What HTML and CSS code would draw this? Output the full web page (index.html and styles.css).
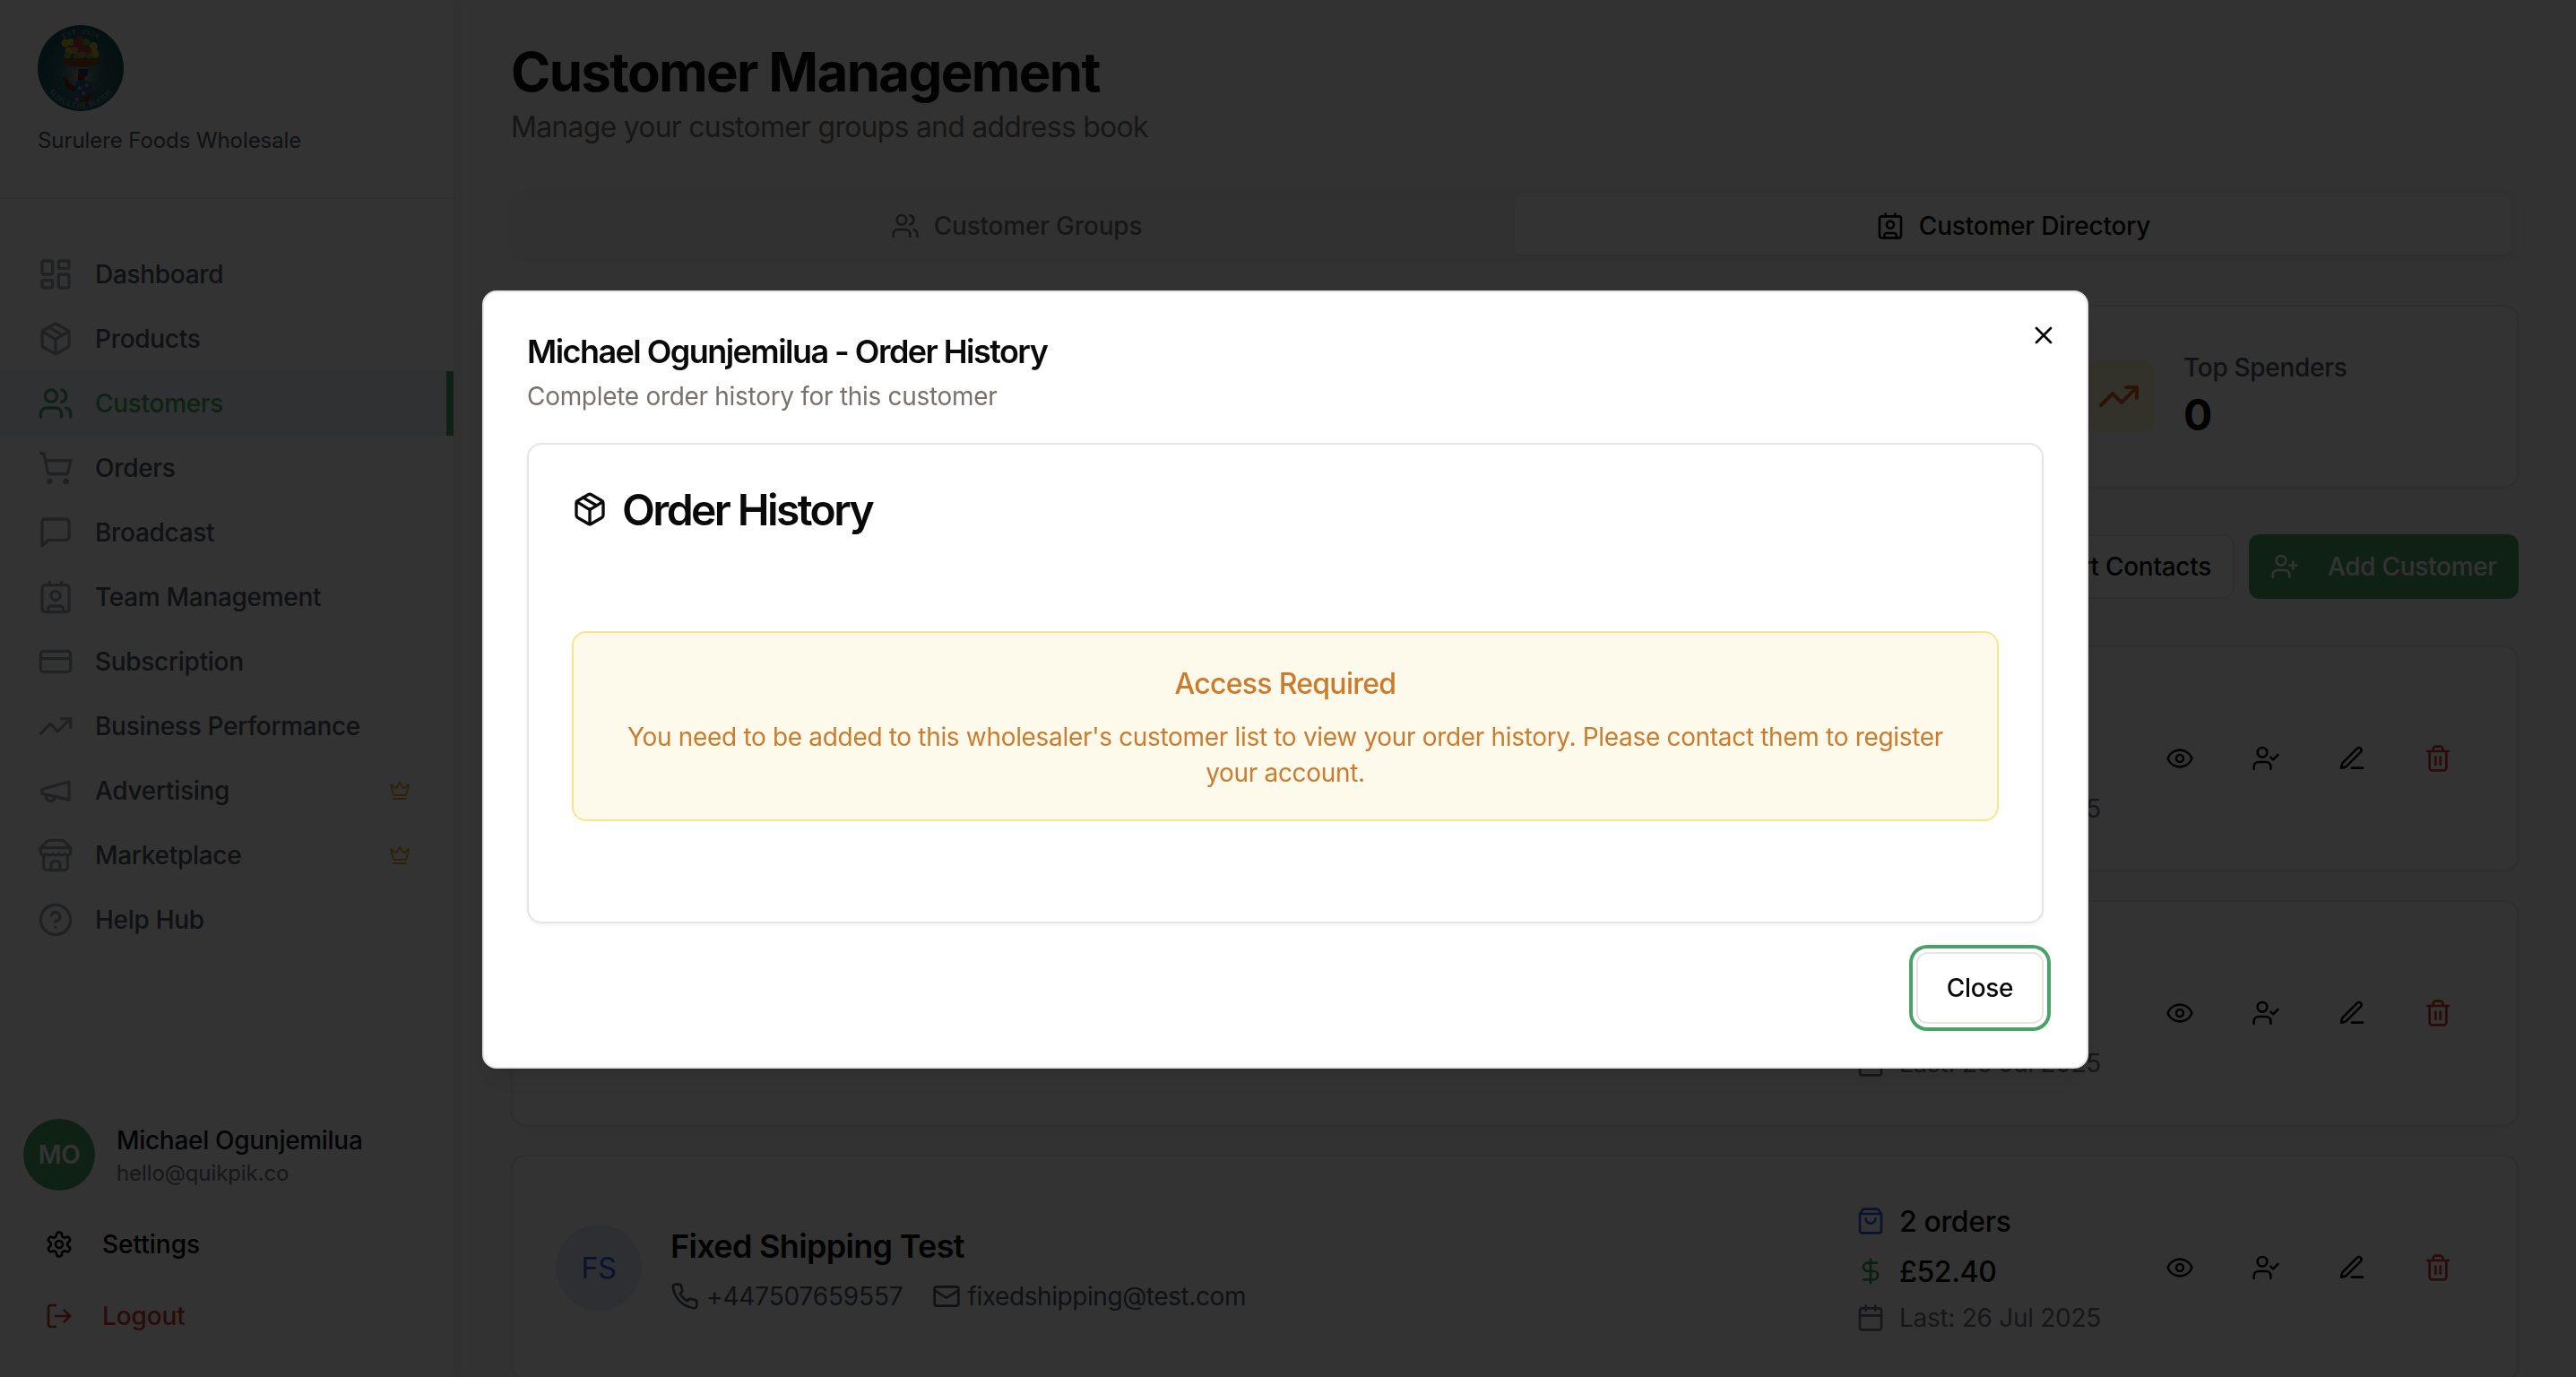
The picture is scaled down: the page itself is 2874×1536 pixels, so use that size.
FILE: index.html
```
<!DOCTYPE html>
<html lang="en">
<head>
<meta charset="utf-8">
<title>Customer Management</title>
<link rel="stylesheet" href="styles.css">
</head>
<body>
<svg class="sprite" aria-hidden="true">
  <symbol id="dashboard" viewBox="0 0 24 24"><rect width="7" height="9" x="3" y="3" rx="1"/><rect width="7" height="5" x="14" y="3" rx="1"/><rect width="7" height="9" x="14" y="12" rx="1"/><rect width="7" height="5" x="3" y="16" rx="1"/></symbol>
  <symbol id="package" viewBox="0 0 24 24"><path d="M11 21.73a2 2 0 0 0 2 0l7-4A2 2 0 0 0 21 16V8a2 2 0 0 0-1-1.73l-7-4a2 2 0 0 0-2 0l-7 4A2 2 0 0 0 3 8v8a2 2 0 0 0 1 1.73z"/><path d="M12 22V12"/><path d="m3.3 7 7.703 4.734a2 2 0 0 0 1.994 0L20.7 7"/><path d="m7.5 4.27 9 5.15"/></symbol>
  <symbol id="users" viewBox="0 0 24 24"><path d="M16 21v-2a4 4 0 0 0-4-4H6a4 4 0 0 0-4 4v2"/><circle cx="9" cy="7" r="4"/><path d="M22 21v-2a4 4 0 0 0-3-3.87"/><path d="M16 3.13a4 4 0 0 1 0 7.75"/></symbol>
  <symbol id="cart" viewBox="0 0 24 24"><circle cx="8" cy="21" r="1"/><circle cx="19" cy="21" r="1"/><path d="M2.05 2.05h2l2.66 12.42a2 2 0 0 0 2 1.58h9.78a2 2 0 0 0 1.95-1.57l1.65-7.43H5.12"/></symbol>
  <symbol id="message" viewBox="0 0 24 24"><path d="M21 15a2 2 0 0 1-2 2H7l-4 4V5a2 2 0 0 1 2-2h14a2 2 0 0 1 2 2z"/></symbol>
  <symbol id="contact" viewBox="0 0 24 24"><path d="M16 2v2"/><path d="M7 22v-2a2 2 0 0 1 2-2h6a2 2 0 0 1 2 2v2"/><path d="M8 2v2"/><circle cx="12" cy="11" r="3"/><rect x="3" y="4" width="18" height="18" rx="2"/></symbol>
  <symbol id="card" viewBox="0 0 24 24"><rect width="20" height="14" x="2" y="5" rx="2"/><path d="M2 10h20"/></symbol>
  <symbol id="trending" viewBox="0 0 24 24"><path d="M22 7l-8.5 8.5-5-5L2 17"/><path d="M16 7h6v6"/></symbol>
  <symbol id="megaphone" viewBox="0 0 24 24"><path d="m3 11 18-5v12L3 14v-3z"/><path d="M11.6 16.8a3 3 0 1 1-5.8-1.6"/></symbol>
  <symbol id="store" viewBox="0 0 24 24"><path d="m2 7 4.41-4.41A2 2 0 0 1 7.83 2h8.34a2 2 0 0 1 1.42.59L22 7"/><path d="M4 12v8a2 2 0 0 0 2 2h12a2 2 0 0 0 2-2v-8"/><path d="M15 22v-4a2 2 0 0 0-2-2h-2a2 2 0 0 0-2 2v4"/><path d="M2 7h20"/><path d="M22 7v3a2 2 0 0 1-2 2a2.7 2.7 0 0 1-1.59-.63.7.7 0 0 0-.82 0A2.7 2.7 0 0 1 16 12a2.7 2.7 0 0 1-1.59-.63.7.7 0 0 0-.82 0A2.7 2.7 0 0 1 12 12a2.7 2.7 0 0 1-1.59-.63.7.7 0 0 0-.82 0A2.7 2.7 0 0 1 8 12a2.7 2.7 0 0 1-1.59-.63.7.7 0 0 0-.82 0A2.7 2.7 0 0 1 4 12a2 2 0 0 1-2-2V7"/></symbol>
  <symbol id="help" viewBox="0 0 24 24"><circle cx="12" cy="12" r="10"/><path d="M9.09 9a3 3 0 0 1 5.83 1c0 2-3 3-3 3"/><path d="M12 17h.01"/></symbol>
  <symbol id="crown" viewBox="0 0 24 24"><path d="M11.562 3.266a.5.5 0 0 1 .876 0L15.39 8.87a1 1 0 0 0 1.516.294L21.183 5.5a.5.5 0 0 1 .798.519l-2.834 10.246a1 1 0 0 1-.956.734H5.81a1 1 0 0 1-.957-.734L2.02 6.02a.5.5 0 0 1 .798-.519l4.276 3.664a1 1 0 0 0 1.516-.294z"/><path d="M5 21h14"/></symbol>
  <symbol id="settings" viewBox="0 0 24 24"><path d="M12.22 2h-.44a2 2 0 0 0-2 2v.18a2 2 0 0 1-1 1.73l-.43.25a2 2 0 0 1-2 0l-.15-.08a2 2 0 0 0-2.73.73l-.22.38a2 2 0 0 0 .73 2.73l.15.1a2 2 0 0 1 1 1.72v.51a2 2 0 0 1-1 1.74l-.15.09a2 2 0 0 0-.73 2.73l.22.38a2 2 0 0 0 2.73.73l.15-.08a2 2 0 0 1 2 0l.43.25a2 2 0 0 1 1 1.73V20a2 2 0 0 0 2 2h.44a2 2 0 0 0 2-2v-.18a2 2 0 0 1 1-1.73l.43-.25a2 2 0 0 1 2 0l.15.08a2 2 0 0 0 2.73-.73l.22-.39a2 2 0 0 0-.73-2.73l-.15-.08a2 2 0 0 1-1-1.74v-.5a2 2 0 0 1 1-1.74l.15-.09a2 2 0 0 0 .73-2.73l-.22-.38a2 2 0 0 0-2.73-.73l-.15.08a2 2 0 0 1-2 0l-.43-.25a2 2 0 0 1-1-1.73V4a2 2 0 0 0-2-2z"/><circle cx="12" cy="12" r="3"/></symbol>
  <symbol id="logout" viewBox="0 0 24 24"><path d="M9 21H5a2 2 0 0 1-2-2V5a2 2 0 0 1 2-2h4"/><path d="m16 17 5-5-5-5"/><path d="M21 12H9"/></symbol>
  <symbol id="user-plus" viewBox="0 0 24 24"><path d="M16 21v-2a4 4 0 0 0-4-4H6a4 4 0 0 0-4 4v2"/><circle cx="9" cy="7" r="4"/><path d="M19 8v6"/><path d="M22 11h-6"/></symbol>
  <symbol id="user-check" viewBox="0 0 24 24"><path d="m16 11 2 2 4-4"/><path d="M16 21v-2a4 4 0 0 0-4-4H6a4 4 0 0 0-4 4v2"/><circle cx="9" cy="7" r="4"/></symbol>
  <symbol id="eye" viewBox="0 0 24 24"><path d="M2.062 12.348a1 1 0 0 1 0-.696 10.75 10.75 0 0 1 19.876 0 1 1 0 0 1 0 .696 10.75 10.75 0 0 1-19.876 0"/><circle cx="12" cy="12" r="3"/></symbol>
  <symbol id="pen" viewBox="0 0 24 24"><path d="M12 20h9"/><path d="M16.376 3.622a1 1 0 0 1 3.002 3.002L7.368 18.635a2 2 0 0 1-.855.506l-2.872.838a.5.5 0 0 1-.62-.62l.838-2.872a2 2 0 0 1 .506-.854z"/></symbol>
  <symbol id="trash" viewBox="0 0 24 24"><path d="M3 6h18"/><path d="M19 6v14c0 1-1 2-2 2H7c-1 0-2-1-2-2V6"/><path d="M8 6V4c0-1 1-2 2-2h4c1 0 2 1 2 2v2"/><path d="M10 11v6"/><path d="M14 11v6"/></symbol>
  <symbol id="bag" viewBox="0 0 24 24"><path d="M6 2 3 6v14a2 2 0 0 0 2 2h14a2 2 0 0 0 2-2V6l-3-4Z"/><path d="M3 6h18"/><path d="M16 10a4 4 0 0 1-8 0"/></symbol>
  <symbol id="dollar" viewBox="0 0 24 24"><path d="M12 2v20"/><path d="M17 5H9.5a3.5 3.5 0 0 0 0 7h5a3.5 3.5 0 0 1 0 7H6"/></symbol>
  <symbol id="calendar" viewBox="0 0 24 24"><path d="M8 2v4"/><path d="M16 2v4"/><rect width="18" height="18" x="3" y="4" rx="2"/><path d="M3 10h18"/></symbol>
  <symbol id="phone" viewBox="0 0 24 24"><path d="M22 16.92v3a2 2 0 0 1-2.18 2 19.79 19.79 0 0 1-8.63-3.07 19.5 19.5 0 0 1-6-6 19.79 19.79 0 0 1-3.07-8.67A2 2 0 0 1 4.11 2h3a2 2 0 0 1 2 1.72 12.84 12.84 0 0 0 .7 2.81 2 2 0 0 1-.45 2.11L8.09 9.91a16 16 0 0 0 6 6l1.27-1.27a2 2 0 0 1 2.11-.45 12.84 12.84 0 0 0 2.81.7A2 2 0 0 1 22 16.92z"/></symbol>
  <symbol id="mail" viewBox="0 0 24 24"><rect width="20" height="16" x="2" y="4" rx="2"/><path d="m22 7-8.97 5.7a1.94 1.94 0 0 1-2.06 0L2 7"/></symbol>
  <symbol id="close" viewBox="0 0 24 24"><path d="M18 6 6 18"/><path d="m6 6 12 12"/></symbol>
</svg>

<div class="app">
  <aside class="sidebar">
    <header class="brand">
      <svg class="brand-logo" viewBox="0 0 96 96">
        <defs>
          <radialGradient id="glow" cx="50%" cy="58%" r="52%"><stop offset="0" stop-color="#8aa58e"/><stop offset=".45" stop-color="#33636a"/><stop offset="1" stop-color="#154f59"/></radialGradient>
          <path id="arc-top" d="M10 48a38 38 0 0 1 76 0"/>
          <path id="arc-bottom" d="M3.500 48a44.500 44.500 0 0 0 89 0"/>
        </defs>
        <circle cx="48" cy="48" r="48" fill="url(#glow)"/>
        <text class="logo-text"><textPath href="#arc-top" startOffset="50%" text-anchor="middle">EST. 2024</textPath></text>
        <g fill="#c9b22f"><circle cx="31" cy="20" r="4.500"/><circle cx="35" cy="29" r="4.500"/><circle cx="62" cy="24" r="5"/><circle cx="64" cy="32" r="4.500"/><circle cx="37" cy="19" r="4"/></g>
        <g fill="#b0403a"><circle cx="47" cy="16" r="4.500"/><circle cx="43" cy="20" r="3.500"/><circle cx="56" cy="28" r="4"/><circle cx="49" cy="25" r="5"/></g>
        <g fill="#78a038"><circle cx="54" cy="19" r="4"/><circle cx="44" cy="34" r="4"/><circle cx="57" cy="34" r="3.500"/><circle cx="33" cy="34" r="4"/></g>
        <g fill="#d0804a"><circle cx="41" cy="28" r="4"/><circle cx="50" cy="33" r="3.500"/></g>
        <path fill="#7d4022" d="M27 37h44q-4 10-22 10T27 37z"/>
        <path fill="#1c3568" d="M45 49h12l-2 8h-8z"/>
        <path fill="#5b2a1a" d="M45 54q7-3 8 4l-1 6-7-1zM28 59l4-1 4 8 7 3-2 6-8-4z"/>
        <path d="M30 60l6-4" stroke="#8a5a30" stroke-width="1.500"/>
        <path fill="#2a5c98" d="M43 63q10-4 17 1l1 14-7 8H41l1-12z"/>
        <g fill="#c8933a"><circle cx="47" cy="70" r="2"/><circle cx="55" cy="67" r="2"/><circle cx="51" cy="76" r="2"/><circle cx="44" cy="83" r="2"/></g>
        <path fill="#6b321c" d="M57 75l5 3-8 9H45z"/>
        <text class="logo-text logo-name"><textPath href="#arc-bottom" startOffset="50%" text-anchor="middle">SURULERE FOODS</textPath></text>
      </svg>
      <div class="brand-name">Surulere Foods Wholesale</div>
    </header>
    <nav class="nav">
      <a class="nav-item"><svg class="icon"><use href="#dashboard"/></svg><span>Dashboard</span></a>
      <a class="nav-item"><svg class="icon"><use href="#package"/></svg><span>Products</span></a>
      <a class="nav-item active"><svg class="icon"><use href="#users"/></svg><span>Customers</span></a>
      <a class="nav-item"><svg class="icon"><use href="#cart"/></svg><span>Orders</span></a>
      <a class="nav-item"><svg class="icon"><use href="#message"/></svg><span>Broadcast</span></a>
      <a class="nav-item"><svg class="icon"><use href="#contact"/></svg><span>Team Management</span></a>
      <a class="nav-item"><svg class="icon"><use href="#card"/></svg><span>Subscription</span></a>
      <a class="nav-item"><svg class="icon"><use href="#trending"/></svg><span>Business Performance</span></a>
      <a class="nav-item"><svg class="icon"><use href="#megaphone"/></svg><span>Advertising</span><svg class="icon crown"><use href="#crown"/></svg></a>
      <a class="nav-item"><svg class="icon"><use href="#store"/></svg><span>Marketplace</span><svg class="icon crown"><use href="#crown"/></svg></a>
      <a class="nav-item"><svg class="icon"><use href="#help"/></svg><span>Help Hub</span></a>
    </nav>
    <footer class="account">
      <div class="profile">
        <div class="profile-avatar">MO</div>
        <div>
          <div class="profile-name">Michael Ogunjemilua</div>
          <div class="profile-email">hello@quikpik.co</div>
        </div>
      </div>
      <a class="account-link"><svg class="icon"><use href="#settings"/></svg>Settings</a>
      <a class="account-link logout"><svg class="icon"><use href="#logout"/></svg>Logout</a>
    </footer>
  </aside>

  <main class="main">
    <h1 class="page-title">Customer Management</h1>
    <p class="page-subtitle">Manage your customer groups and address book</p>
    <div class="tabs">
      <div class="tab"><svg class="icon"><use href="#users"/></svg>Customer Groups</div>
      <div class="tab selected"><svg class="icon"><use href="#contact"/></svg>Customer Directory</div>
    </div>
    <section class="stats">
      <div class="stat-card">
        <div class="stat-icon"><svg class="icon"><use href="#trending"/></svg></div>
        <div>
          <div class="stat-label">Top Spenders</div>
          <div class="stat-value">0</div>
        </div>
      </div>
    </section>
    <div class="toolbar">
      <button class="btn btn-outline">Import Contacts</button>
      <button class="btn btn-primary"><svg class="icon"><use href="#user-plus"/></svg>Add Customer</button>
    </div>
    <section class="customers">
      <article class="customer">
        <div class="metrics">
          <div class="metric date"><svg class="icon"><use href="#calendar"/></svg>Last: 26 Jul 2025</div>
        </div>
        <div class="actions"><svg class="icon"><use href="#eye"/></svg><svg class="icon"><use href="#user-check"/></svg><svg class="icon"><use href="#pen"/></svg><svg class="icon danger"><use href="#trash"/></svg></div>
      </article>
      <article class="customer">
        <div class="metrics">
          <div class="metric date"><svg class="icon"><use href="#calendar"/></svg>Last: 26 Jul 2025</div>
        </div>
        <div class="actions"><svg class="icon"><use href="#eye"/></svg><svg class="icon"><use href="#user-check"/></svg><svg class="icon"><use href="#pen"/></svg><svg class="icon danger"><use href="#trash"/></svg></div>
      </article>
      <article class="customer">
        <div class="customer-avatar">FS</div>
        <div class="customer-info">
          <div class="customer-name">Fixed Shipping Test</div>
          <div class="contacts">
            <span class="contact"><svg class="icon"><use href="#phone"/></svg><span class="phone-number">+447507659557</span></span>
            <span class="contact"><svg class="icon"><use href="#mail"/></svg><span class="email">fixedshipping@test.com</span></span>
          </div>
        </div>
        <div class="metrics">
          <div class="metric orders"><svg class="icon"><use href="#bag"/></svg><span>2 orders</span></div>
          <div class="metric spend"><svg class="icon"><use href="#dollar"/></svg><span>£52.40</span></div>
          <div class="metric date"><svg class="icon"><use href="#calendar"/></svg>Last: 26 Jul 2025</div>
        </div>
        <div class="actions"><svg class="icon"><use href="#eye"/></svg><svg class="icon"><use href="#user-check"/></svg><svg class="icon"><use href="#pen"/></svg><svg class="icon danger"><use href="#trash"/></svg></div>
      </article>
    </section>
  </main>
</div>

<div class="overlay">
  <div class="dialog" role="dialog">
    <svg class="icon dialog-x"><use href="#close"/></svg>
    <h2 class="dialog-title">Michael Ogunjemilua - Order History</h2>
    <p class="dialog-desc">Complete order history for this customer</p>
    <section class="history">
      <h3 class="history-title"><svg class="icon"><use href="#package"/></svg><span>Order History</span></h3>
      <div class="notice">
        <p class="notice-title">Access Required</p>
        <p class="notice-text">You need to be added to this wholesaler's customer list to view your order history. Please contact them to register<br>your account.</p>
      </div>
    </section>
    <button class="btn close-btn">Close</button>
  </div>
</div>
</body>
</html>
```
FILE: styles.css
```
*, *::before, *::after { box-sizing: border-box; }
body, h1, h2, h3, p { margin: 0; }
body {
  height: 1536px;
  overflow: hidden;
  background: #fafafa;
  color: #0a0a0a;
  font-family: Inter, "Liberation Sans", sans-serif;
  font-size: 28px;
  line-height: 40px;
  letter-spacing: -.3px;
}
.sprite { display: none; }
.icon {
  width: 32px;
  height: 32px;
  flex: none;
  fill: none;
  stroke: currentColor;
  stroke-width: 2;
  stroke-linecap: round;
  stroke-linejoin: round;
}
.app { display: flex; height: 1536px; overflow: hidden; }

/* Sidebar */
.sidebar {
  width: 506px;
  flex: none;
  display: flex;
  flex-direction: column;
  background: #fff;
  box-shadow: 4px 0 16px rgba(0, 0, 0, .06);
}
.brand { height: 222px; padding: 28px 42px 0; border-bottom: 2px solid #e8e8e8; }
.brand-logo { display: block; width: 96px; height: 96px; }
.logo-text { font: 8px "Liberation Serif", serif; fill: #9fb3aa; letter-spacing: .8px; }
.logo-name { font-size: 9px; letter-spacing: .3px; }
.brand-name { margin-top: 17px; font-size: 24px; line-height: 32px; letter-spacing: -.08px; color: #4b5563; }
.nav { padding-top: 48px; }
.nav-item {
  display: flex;
  align-items: center;
  gap: 24px;
  height: 72px;
  padding: 0 48px 0 42px;
  color: #4b5563;
  font-weight: 500;
}
.nav-item .icon { width: 40px; height: 40px; color: #9ca3af; }
.nav-item.active { color: #4aa366; background: #eff6fb; border-right: 8px solid #4aa366; }
.nav-item.active .icon { color: #4aa366; }
.nav-item .crown { width: 24px; height: 24px; margin-left: auto; color: #dcae2f; }
.account { margin-top: auto; padding: 0 26px 32px; height: 288px; }
.profile { display: flex; align-items: center; gap: 24px; height: 80px; margin-bottom: 24px; }
.profile-avatar {
  width: 80px; height: 80px; border-radius: 50%;
  display: grid; place-items: center;
  background: #4aa366; color: #fff; font-weight: 600;
}
.profile-name { color: #111827; font-weight: 500; }
.profile-email { padding-top: 1px; font-size: 24px; line-height: 32px; letter-spacing: -.1px; color: #6b7280; }
.account-link { display: flex; align-items: center; gap: 32px; height: 72px; margin-bottom: 8px; padding-left: 24px; font-weight: 500; letter-spacing: 0; color: #000; }
.account-link.logout { color: #cf3a31; letter-spacing: -.1px; }

/* Page */
.main { flex: 1; padding: 44px 64px 0; }
.page-title { font-size: 60px; line-height: 72px; font-weight: 700; letter-spacing: -1.7px; }
.page-subtitle { margin-top: 2px; font-size: 32px; line-height: 48px; letter-spacing: -.77px; color: #78716c; }
.tabs { display: grid; grid-template-columns: 1fr 1fr; height: 80px; margin-top: 46px; padding: 8px; border-radius: 12px; background: #f5f5f4; }
.tab { display: flex; align-items: center; justify-content: center; gap: 16px; border-radius: 8px; font-weight: 500; letter-spacing: -.2px; color: #78716c; }
.tab.selected { background: #fff; color: #0a0a0a; box-shadow: 0 2px 4px rgba(0, 0, 0, .08); }
.stats { display: flex; justify-content: flex-end; margin-top: 48px; }
.stat-card, .customer, .history { background: #fff; border: 2px solid #e5e5e5; border-radius: 16px; box-shadow: 0 2px 4px rgba(0, 0, 0, .05); }
.stat-card { display: flex; align-items: center; gap: 32px; width: 536px; height: 204px; padding: 48px; }
.stat-icon { display: grid; place-items: center; width: 80px; height: 80px; border-radius: 16px; background: #fbf2cf; color: #d9602b; }
.stat-icon .icon { width: 48px; height: 48px; }
.stat-label { font-weight: 500; color: #4b5563; }
.stat-value { padding-top: 1px; font-size: 48px; line-height: 63px; font-weight: 700; }
.toolbar { display: flex; justify-content: flex-end; gap: 16px; margin-top: 52px; }
.btn { display: flex; align-items: center; height: 72px; border: 0; border-radius: 12px; font: inherit; font-weight: 500; letter-spacing: inherit; color: #0a0a0a; white-space: nowrap; }
.btn-outline { padding: 0 24px; background: #fff; border: 2px solid #e5e5e5; }
.btn-primary { gap: 32px; width: 301px; padding: 0 24px; background: #4aa366; color: #fff; }
.customers { display: grid; gap: 32px; margin-top: 52px; }
.customer { display: flex; align-items: center; height: 252px; padding: 48px; }
.customer-avatar { display: grid; place-items: center; width: 96px; height: 96px; margin-right: 32px; padding-top: 1px; border-radius: 50%; background: #dfe9fc; color: #3662e3; font-size: 32px; }
.customer-name { margin-bottom: 8px; font-size: 36px; line-height: 56px; font-weight: 600; letter-spacing: -.68px; }
.contacts { display: flex; gap: 32px; color: #4b5563; }
.contact { display: flex; align-items: center; gap: 8px; }
.phone-number { letter-spacing: -.15px; }
.email { letter-spacing: -.42px; }
.metrics { display: flex; flex-direction: column; justify-content: flex-end; gap: 8px; width: 273px; height: 152px; margin-left: auto; margin-right: 48px; }
.metric { display: flex; align-items: center; gap: 16px; height: 48px; font-size: 32px; line-height: 46px; font-weight: 500; letter-spacing: -.38px; white-space: nowrap; }
.metric span { padding-top: 2px; }
.metric.date { height: 40px; font-size: 28px; line-height: 40px; font-weight: 400; letter-spacing: -.28px; color: #6b7280; }
.orders .icon { color: #3662e3; }
.spend .icon { color: #3f9f55; }
.actions { display: flex; gap: 64px; padding: 0 24px; }
.danger { color: #cf3a31; }

/* Dialog */
.overlay { position: fixed; inset: 0; padding: 324px 0 0 538px; background: rgba(0, 0, 0, .8); }
.dialog {
  position: relative;
  display: flex;
  flex-direction: column;
  width: 1792px;
  height: 868px;
  padding: 48px;
  background: #fff;
  border: 2px solid #e5e5e5;
  border-radius: 16px;
  box-shadow: 0 20px 30px -6px rgba(0, 0, 0, .1), 0 8px 12px -8px rgba(0, 0, 0, .1);
}
.dialog-x { position: absolute; top: 32px; right: 32px; }
.dialog-title { font-size: 36px; line-height: 36px; font-weight: 600; letter-spacing: -1.55px; }
.dialog-desc { margin-top: 12px; color: #78716c; }
.history { height: 536px; margin-top: 32px; padding: 48px; }
.history-title { display: flex; align-items: center; gap: 16px; height: 48px; font-size: 48px; line-height: 46px; font-weight: 600; letter-spacing: -2.6px; }
.history-title span { padding-top: 2px; }
.history-title .icon { width: 40px; height: 40px; }
.notice { height: 212px; margin-top: 112px; padding: 33px 32px 31px; text-align: center; color: #cb7b2d; background: #fefaeb; border: 2px solid #f9e58c; border-radius: 16px; white-space: nowrap; }
.notice-title { font-size: 32px; line-height: 48px; font-weight: 500; letter-spacing: -.73px; }
.notice-text { margin-top: 15px; letter-spacing: -.325px; }
.close-btn { align-self: flex-end; justify-content: center; width: 142px; height: 80px; margin-top: 32px; background: #fff; border: 2px solid #e5e5e5; box-shadow: 0 0 0 4px #fff, 0 0 0 8px #4aa366; }
```
